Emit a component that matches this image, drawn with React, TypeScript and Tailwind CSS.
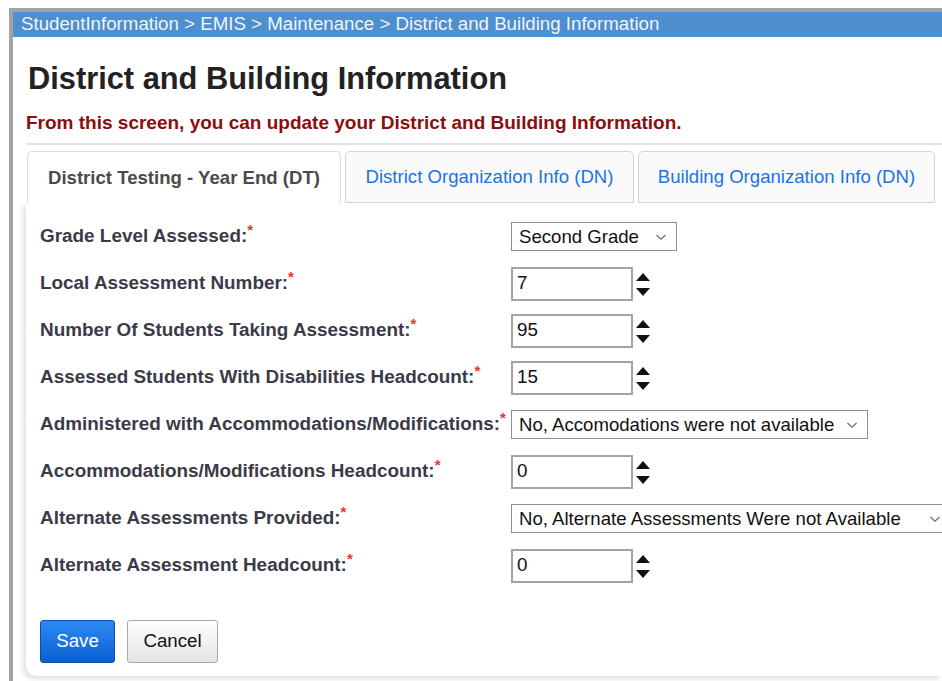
import React from "react";

type Field = {
  label: string;
  kind: "select" | "number";
  value: string;
  width?: string;
};

const fields: Field[] = [
  { label: "Grade Level Assessed:", kind: "select", value: "Second Grade", width: "w-[166px]" },
  { label: "Local Assessment Number:", kind: "number", value: "7" },
  { label: "Number Of Students Taking Assessment:", kind: "number", value: "95" },
  { label: "Assessed Students With Disabilities Headcount:", kind: "number", value: "15" },
  {
    label: "Administered with Accommodations/Modifications:",
    kind: "select",
    value: "No, Accomodations were not available",
    width: "w-[357px]",
  },
  { label: "Accommodations/Modifications Headcount:", kind: "number", value: "0" },
  {
    label: "Alternate Assessments Provided:",
    kind: "select",
    value: "No, Alternate Assessments Were not Available",
    width: "w-[440px]",
  },
  { label: "Alternate Assessment Headcount:", kind: "number", value: "0" },
];

const tabs = [
  { name: "District Testing - Year End (DT)", active: true, width: "w-[314px]" },
  { name: "District Organization Info (DN)", active: false, width: "w-[289px]" },
  { name: "Building Organization Info (DN)", active: false, width: "w-[297px]" },
];

function Chevron() {
  return (
    <svg width="12" height="8" viewBox="0 0 12 8" className="shrink-0">
      <path d="M1.5 2 L6 6.2 L10.5 2" fill="none" stroke="#6b6b6b" strokeWidth="1.2" />
    </svg>
  );
}

function Spinner() {
  return (
    <svg width="16" height="30" viewBox="0 0 16 30" className="ml-[2px] shrink-0">
      <path d="M8 4 L15 12 L1 12 Z" fill="#111" />
      <path d="M1 19 L15 19 L8 27 Z" fill="#111" />
    </svg>
  );
}

function Control({ field }: { field: Field }) {
  if (field.kind === "select") {
    return (
      <div
        className={`${field.width} flex h-[29px] shrink-0 items-center justify-between border border-[#8f8f8f] bg-white pl-[7px] pr-[9px] text-[18.6px] text-[#111]`}
      >
        <span className="whitespace-nowrap">{field.value}</span>
        <Chevron />
      </div>
    );
  }

  return (
    <div className="flex items-center">
      <div className="flex h-[34px] w-[122px] items-center border-2 border-[#a3a3a3] bg-white pl-[4px] text-[18.8px] text-[#111]">
        {field.value}
      </div>
      <Spinner />
    </div>
  );
}

export default function App() {
  return (
    <div className="min-h-screen overflow-hidden bg-white pl-[9px] pt-[8px] font-['Liberation_Sans',Arial,sans-serif]">
      <div className="min-h-[673px] border-l-4 border-t-4 border-[#a3a3a3] bg-white">
        <div className="flex h-[25px] items-center bg-[#4e8fcf] pl-[8px] text-[18.7px] text-[#eef4fb] whitespace-nowrap">
          StudentInformation &gt; EMIS &gt; Maintenance &gt; District and Building Information
        </div>

        <div className="pl-[13px]">
          <h1 className="mt-[24px] pl-[2px] text-[30.8px] font-bold leading-[36px] text-[#222]">
            District and Building Information
          </h1>
          <p className="mt-[15px] text-[19px] font-bold leading-[22px] text-[#8b0d0d]">
            From this screen, you can update your District and Building Information.
          </p>

          <div className="mt-[9px] h-[2px] bg-[#e3e3e3]" />

          <div className="mt-[6px] flex gap-[4px] pl-[1px]">
            {tabs.map((tab) => (
              <div
                key={tab.name}
                className={
                  tab.active
                    ? `${tab.width} flex h-[52px] shrink-0 items-center justify-center rounded-t-[5px] border border-b-0 border-[#dcdcdc] bg-white text-[18.6px] font-bold text-[#4a4a4a]`
                    : `${tab.width} flex h-[52px] shrink-0 items-center justify-center rounded-t-[5px] border border-[#d3d3d3] bg-[#fafafa] text-[18.6px] text-[#1a73e8]`
                }
              >
                {tab.name}
              </div>
            ))}
          </div>

          <div className="rounded-bl-[10px] bg-white pb-[13px] pl-[14px] pt-[10px] shadow-[-3px_3px_5px_rgba(0,0,0,0.12)]">
            <div className="flex flex-col">
              {fields.map((field) => (
                <div key={field.label} className="flex h-[47px] items-center">
                  <div className="w-[471px] shrink-0 whitespace-nowrap text-[18.9px] font-bold text-[#3b3b48]">
                    {field.label}
                    <span className="relative -top-[7px] text-[15px] text-[#f03030]">*</span>
                  </div>
                  <Control field={field} />
                </div>
              ))}
            </div>

            <div className="mt-[31px] flex gap-[12px]">
              <button
                type="button"
                className="h-[43px] w-[75px] rounded-[3px] border border-[#0a4fae] bg-gradient-to-b from-[#2b8af3] to-[#0a5fd2] text-[18.7px] text-white"
              >
                Save
              </button>
              <button
                type="button"
                className="h-[43px] w-[91px] rounded-[3px] border border-[#a8a8a8] bg-gradient-to-b from-[#ffffff] to-[#e4e4e4] text-[18.7px] text-[#111]"
              >
                Cancel
              </button>
            </div>
          </div>
        </div>
      </div>
    </div>
  );
}
